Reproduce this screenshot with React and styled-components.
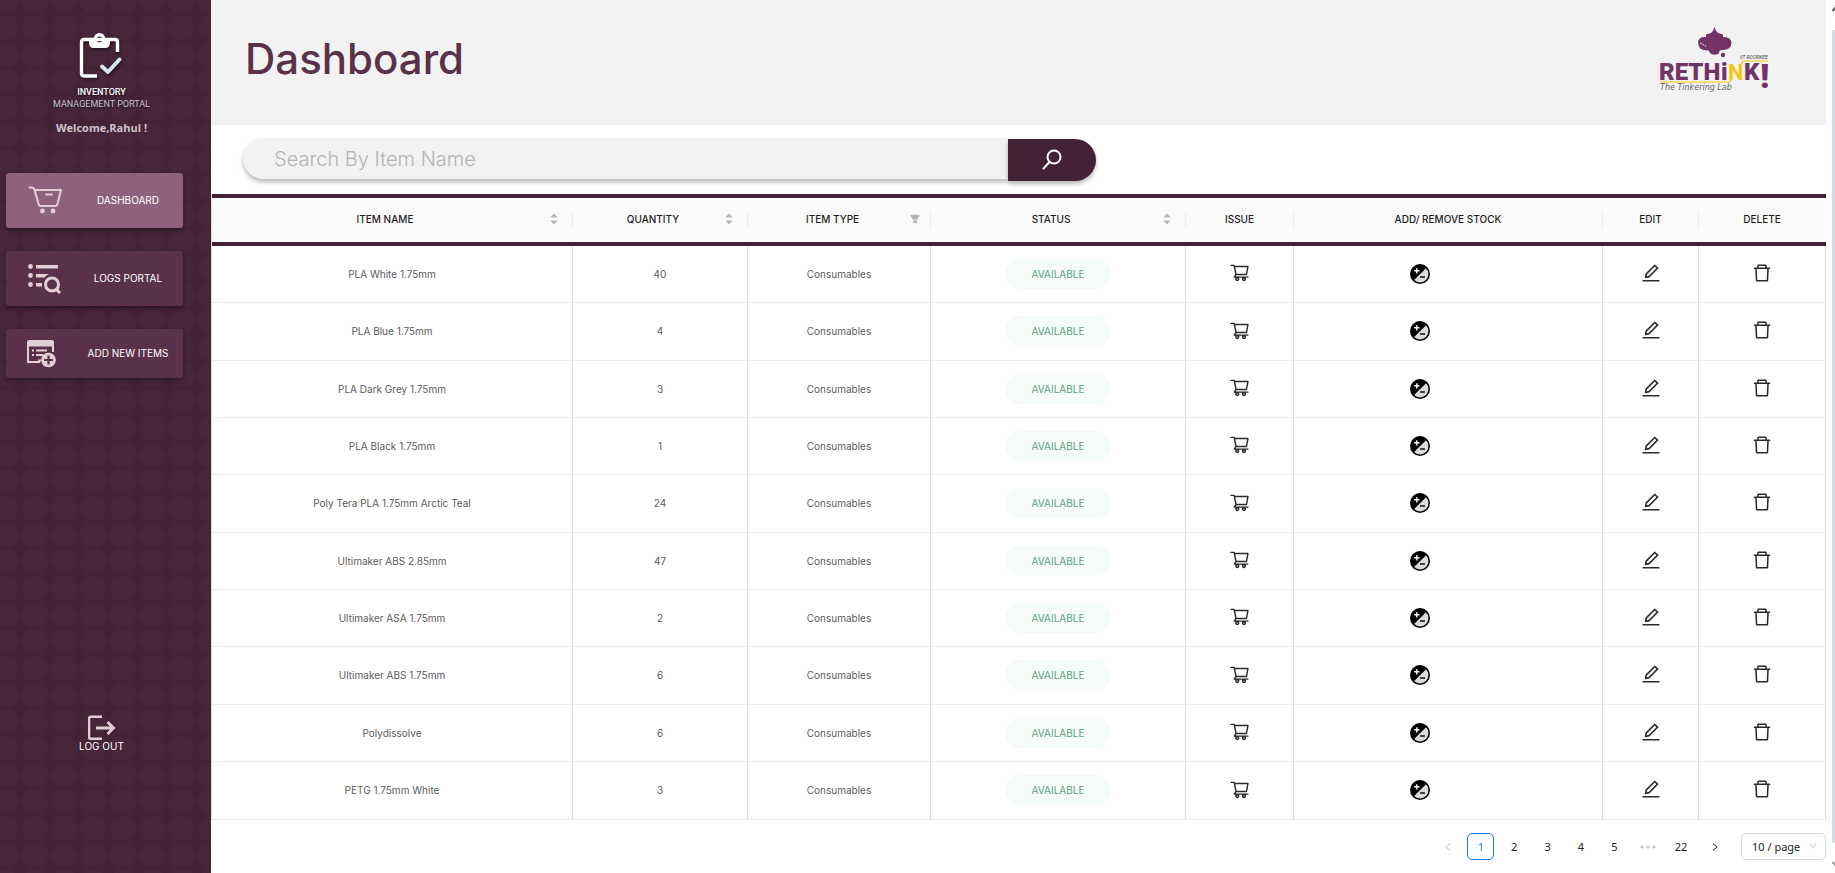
import React from "react";
import styled, { createGlobalStyle, css } from "styled-components";
import {
  AiOutlineShoppingCart,
  AiOutlineEdit,
  AiOutlineDelete,
  AiOutlineLeft,
  AiOutlineRight,
  AiOutlineDown,
  AiFillFilter,
} from "react-icons/ai";

const color = {
  plum: "#432235",
  plumHex: "#462638",
  plumButton: "#593249",
  plumActive: "#90617c",
  cream: "#e0d0d4",
  band: "#f2f2f2",
  line: "#dcdcdc",
};

const GlobalStyle = createGlobalStyle`
  *, *::before, *::after { box-sizing: border-box; }
  body { margin: 0; background: #fff; font-family: Inter, sans-serif; }
  button, input, select { font-family: inherit; }
`;

const Page = styled.div`
  display: flex;
  min-height: 100vh;
`;

/* ---------- sidebar ---------- */

const Sidebar = styled.aside`
  position: relative;
  flex: 0 0 211px;
  display: flex;
  flex-direction: column;
  padding: 30px 0 120px;
  background: ${color.plum};
`;

const Texture = styled.svg`
  position: absolute;
  inset: 0;
  width: 100%;
  height: 100%;
`;

const Brand = styled.div`
  position: relative;
  display: flex;
  flex-direction: column;
  align-items: center;
  padding-right: 8px;
  font-family: Roboto, sans-serif;
  font-size: 9px;
  line-height: 12px;
  text-shadow: 0 1px 2px rgba(0, 0, 0, 0.6);
`;

const BrandMark = styled.svg`
  width: 46px;
  height: 50px;
  margin-bottom: 6px;
  overflow: visible;
  filter: drop-shadow(1px 2px 1px rgba(0, 0, 0, 0.4));
`;

const BrandName = styled.span`
  color: #fff;
  font-weight: 500;
`;

const BrandSub = styled.span`
  color: #c9c5d6;
`;

const Welcome = styled.p`
  position: relative;
  margin: 10px 8px 0 0;
  font-family: "Open Sans", sans-serif;
  font-size: 11px;
  line-height: 16px;
  font-weight: 700;
  text-align: center;
  color: #cfc2ca;
`;

const Nav = styled.nav`
  position: relative;
  display: flex;
  flex-direction: column;
  gap: 23px;
  margin: 37px 28px 0 6px;
`;

const NavButton = styled.button`
  display: flex;
  align-items: center;
  gap: 11px;
  height: ${(p) => (p.$short ? 49 : 55)}px;
  padding: 0 0 0 21px;
  border: 0;
  border-radius: 3px;
  background: ${(p) => (p.$active ? color.plumActive : color.plumButton)};
  box-shadow: 0 3px 4px rgba(0, 0, 0, 0.3);
  color: #fff;
  cursor: pointer;
`;

const NavIcon = styled.svg`
  flex: none;
  width: 35px;
  height: 31px;
`;

const Label = styled.span`
  flex: 1;
  padding-bottom: 1px;
  font-size: 10px;
  line-height: 12px;
  text-align: center;
`;

const LogOut = styled.button`
  position: relative;
  display: flex;
  flex-direction: column;
  align-items: center;
  align-self: center;
  margin: auto 8px 0 0;
  padding: 0;
  border: 0;
  background: none;
  color: #fff;
  cursor: pointer;
`;

/* ---------- main ---------- */

const Main = styled.main`
  flex: 1;
  min-width: 0;
`;

const Header = styled.header`
  display: flex;
  align-items: center;
  justify-content: space-between;
  height: 125px;
  padding: 0 54px 7px 34px;
  background: ${color.band};
`;

const Title = styled.h1`
  margin: 0;
  font-size: 42px;
  line-height: 52px;
  font-weight: 500;
  color: ${color.plumButton};
`;

const SearchForm = styled.form`
  display: flex;
  max-width: 885px;
  padding: 13px 0 13px 32px;
`;

const SearchInput = styled.input`
  flex: 1;
  min-width: 0;
  height: 41px;
  padding: 0 31px;
  border: 0;
  border-radius: 21px 0 0 21px;
  outline: 0;
  background: ${color.band};
  box-shadow: 0 3px 4px rgba(0, 0, 0, 0.28);
  font-size: 20px;
  font-weight: 300;
  color: #444;
  &::placeholder {
    color: #b4b4b4;
    opacity: 1;
  }
`;

const SearchButton = styled.button`
  width: 88px;
  height: 42px;
  margin-top: 1px;
  padding: 0;
  display: grid;
  place-items: center;
  border: 0;
  border-radius: 0 21px 21px 0;
  background: ${color.plum};
  box-shadow: 0 3px 4px rgba(0, 0, 0, 0.28);
  cursor: pointer;
`;

const TableArea = styled.div`
  padding-right: 1px;
`;

const Table = styled.table`
  width: 100%;
  table-layout: fixed;
  border-collapse: separate;
  border-spacing: 0;
  border-left: 1px solid ${color.line};
  font-size: 10px;
  line-height: 12px;
`;

const HeadCell = styled.th`
  position: relative;
  height: 52px;
  padding: 0 ${(p) => (p.$filter ? 10 : 15)}px 2px 14px;
  border-top: 4px solid ${color.plum};
  border-bottom: 4px solid ${color.plum};
  background: #fafafa;
  font-weight: 500;
  color: #1f1f1f;
  &:not(:last-child)::after {
    content: "";
    position: absolute;
    top: 14px;
    right: 0;
    width: 1px;
    height: 16px;
    background: #ececec;
  }
`;

const HeadInner = styled.div`
  display: flex;
  align-items: center;
  gap: 6px;
`;

const HeadTitle = styled.span`
  flex: 1;
`;

const HeadTool = styled.button`
  display: flex;
  padding: 0;
  border: 0;
  background: none;
  color: #b3b3b3;
  cursor: pointer;
`;

const Row = styled.tr`
  height: 57px;
  &:nth-child(3n + 2) {
    height: 58px;
  }
  &:last-child {
    height: 58px;
  }
`;

const Cell = styled.td`
  padding: 0 0 1px;
  border-right: 1px solid ${color.line};
  border-bottom: 1px solid #ededed;
  text-align: center;
  color: #5c5c5c;
  ${(p) =>
    p.$stock &&
    css`
      padding-right: 56px;
    `}
`;

const Status = styled.span`
  display: inline-block;
  width: 106px;
  border-radius: 15px;
  background: #f4fbf8;
  line-height: 30px;
  color: #5f9f86;
  vertical-align: middle;
`;

const IconButton = styled.button`
  display: block;
  margin: 0 auto;
  padding: 0 0 ${(p) => (p.$raised ? 2 : 0)}px;
  border: 0;
  background: none;
  color: #2b2b2b;
  line-height: 0;
  cursor: pointer;
`;

const Footer = styled.footer`
  display: flex;
  justify-content: flex-end;
  gap: 13px;
  padding: 13px 0;
  font-family: "Noto Sans", sans-serif;
`;

const Pages = styled.nav`
  display: flex;
  justify-content: space-between;
  width: 294px;
`;

const PageButton = styled.button`
  display: grid;
  place-items: center;
  width: 27px;
  height: 27px;
  padding: 0;
  border: 1px solid ${(p) => (p.$current ? "#1677ff" : "transparent")};
  border-radius: 5px;
  background: none;
  font-size: 11px;
  color: ${(p) => (p.$current ? "#1677ff" : p.disabled ? "#bfbfbf" : "#222")};
`;

const SizePicker = styled.label`
  position: relative;
  display: block;
  width: 85px;
  height: 27px;
  svg {
    position: absolute;
    top: 8px;
    right: 8px;
    color: #b8b8b8;
    pointer-events: none;
  }
`;

const SizeSelect = styled.select`
  appearance: none;
  width: 100%;
  height: 100%;
  padding: 0 10px;
  border: 1px solid #d9d9d9;
  border-radius: 5px;
  background: #fff;
  font-size: 11px;
  color: #222;
`;

const ScrollRail = styled.div`
  flex: 0 0 3px;
  display: flex;
  flex-direction: column;
  gap: 18px;
  margin-left: 6px;
  padding: 6px 0;
  overflow: hidden;
`;

const ScrollThumb = styled.div`
  flex: 1;
  border-radius: 2px 0 0 2px;
  background: #d0dce4;
`;

/* ---------- drawings ---------- */

function HexTexture() {
  return (
    <Texture aria-hidden="true">
      <defs>
        <pattern id="hex" x="-9.3" y="-10.7" width="29.4" height="26.7" patternUnits="userSpaceOnUse">
          <path d="M0 11.5 L6.8 .3 H22.6 L29.4 11.5 L22.6 23 H6.8 Z" fill={color.plumHex} />
          <path d="M0 24.8 H29.4" stroke="#452333" strokeWidth="1" />
        </pattern>
      </defs>
      <rect width="100%" height="100%" fill="url(#hex)" />
    </Texture>
  );
}

function Clipboard() {
  return (
    <BrandMark viewBox="1 -2 46 50" aria-hidden="true">
      <path d="M19 44 H6 Q3.500 44 3.500 41.500 V10 Q3.500 7.500 6 7.500 H37 Q39.500 7.500 39.500 10 V20" fill="none" stroke="#fff" strokeWidth="3.400" />
      <path fillRule="evenodd" fill="#fff" d="M11 7 H15.500 Q16.500 1 21.500 1 T27.500 7 H32 V11 Q32 16 27 16 H16 Q11 16 11 11 Z M21.500 4.500 A2.900 2.900 0 1 0 21.500 10.300 A2.900 2.900 0 1 0 21.500 4.500 Z" />
      <path d="M24 34.500 L30 40 L41.500 27.500" fill="none" stroke="#d3e4f2" strokeWidth="4" strokeLinecap="round" strokeLinejoin="round" />
    </BrandMark>
  );
}

const navDrawings = {
  cart: (
    <>
      <path d="M2.500 2.500 Q7 2 7.500 4.500 L11.500 19 Q12 21 14 21 H28 Q30 21 30.500 19 L34 5 H8" fill="none" stroke="currentColor" strokeWidth="2" strokeLinecap="round" strokeLinejoin="round" />
      <path d="M19 9.500 H25" stroke="currentColor" strokeWidth="2" strokeLinecap="round" />
      <circle cx="15.500" cy="26" r="2.400" fill="currentColor" />
      <circle cx="26" cy="26" r="2.400" fill="currentColor" />
    </>
  ),
  logs: (
    <>
      <g fill="currentColor">
        <circle cx="3.500" cy="3.500" r="2.400" />
        <circle cx="3.500" cy="12.500" r="2.400" />
        <circle cx="3.500" cy="21.500" r="2.400" />
        <path d="M9 2 H31 V5.500 H9 Z M9 11 H22 Q19 12 17.500 14.500 H9 Z M9 20 H15 V23.500 H9 Z" />
      </g>
      <circle cx="25" cy="21.500" r="6.500" fill="none" stroke="currentColor" strokeWidth="3" />
      <path d="M29.500 26.500 L33 30" stroke="currentColor" strokeWidth="3" />
    </>
  ),
  add: (
    <>
      <path d="M0 4 Q0 2 2 2 H25 Q27 2 27 4 V14 H25 V8.500 H2 V23 H13 V25 H0 Z" fill="currentColor" />
      <path d="M5 12.500 H7 M5 17 H7 M9 12.500 H20 M9 17 H16 M11 22.500 H14" stroke="currentColor" strokeWidth="1.800" />
      <circle cx="21.500" cy="22" r="7.300" fill="currentColor" />
      <path d="M21.500 17.500 V26.500 M17 22 H26" stroke={color.plumButton} strokeWidth="2.200" />
    </>
  ),
};

const LogoSvg = styled.svg`
  overflow: visible;
`;

function LabLogo() {
  const purple = "#733365";
  return (
    <LogoSvg width="112" height="66" viewBox="0 0 112 66" role="img" aria-label="Rethink! The Tinkering Lab, IIT Roorkee">
      <path
        fill={purple}
        d="M54.500 1 Q55.500 5 58 7 L63 8.500 V11 Q71 10.500 71.500 17 Q71 24 63 24 Q60 24 59.500 25 L58.500 28 Q52 30 49.500 26.500 L49 24.500 Q38 25 38 16.500 Q38.500 10.500 46 11 V8.500 L51 7 Q53.500 5 54.500 1 Z"
      />
      <path d="M40 17.500 Q42 16 43 19 Q45.500 18 46 21.500" fill="none" stroke="#e9dfe7" strokeWidth="1" strokeDasharray="2 1" />
      <circle cx="63" cy="29" r="2.200" fill={purple} />
      <g fontFamily="Roboto, sans-serif" fontWeight="900" fontSize="24" fill={purple}>
        <text x="-1" y="54">RETH</text>
        <text x="61" y="54">i</text>
        <text x="68" y="54" fill="#f4c50c" fontWeight="700" fontSize="22">N</text>
        <text x="84" y="54">K</text>
        <text x="100" y="62" fontSize="34">!</text>
      </g>
      <path d="M0 56 H70 L72 51 M81 38 L83 35 H108" fill="none" stroke="#f4c50c" strokeWidth="1.200" />
      <text x="0" y="64" fontFamily="DejaVu Sans, sans-serif" fontStyle="italic" fontSize="8" fill="#666">The Tinkering Lab</text>
      <text x="80" y="33" fontFamily="Roboto, sans-serif" fontStyle="italic" fontSize="5" fill="#444">IIT ROORKEE</text>
    </LogoSvg>
  );
}

function StockIcon() {
  return (
    <svg width="20" height="20" viewBox="0 0 20 20" aria-hidden="true">
      <circle cx="10" cy="10" r="10" fill="#000" />
      <path d="M16 4.200 A8.300 8.300 0 0 1 4.200 16 Z" fill="#dcdcdc" />
      <path d="M6.800 4.200 V9.400 M4.200 6.800 H9.400" stroke="#fff" strokeWidth="1.400" />
      <path d="M10 13 H15" stroke="#000" strokeWidth="1.400" />
    </svg>
  );
}

/* ---------- data ---------- */

const navItems = [
  { text: "DASHBOARD", drawing: "cart", active: true },
  { text: "LOGS PORTAL", drawing: "logs" },
  { text: "ADD NEW ITEMS", drawing: "add", short: true },
];

const columns = [
  { title: "ITEM NAME", width: 361, tool: "sort" },
  { title: "QUANTITY", width: 175, tool: "sort" },
  { title: "ITEM TYPE", width: 183, tool: "filter" },
  { title: "STATUS", width: 255, tool: "sort" },
  { title: "ISSUE", width: 108 },
  { title: "ADD/ REMOVE STOCK", width: 309 },
  { title: "EDIT", width: 96 },
  { title: "DELETE", width: 127 },
];

const items = [
  ["PLA White 1.75mm", 40],
  ["PLA Blue 1.75mm", 4],
  ["PLA Dark Grey 1.75mm", 3],
  ["PLA Black 1.75mm", 1],
  ["Poly Tera PLA 1.75mm Arctic Teal", 24],
  ["Ultimaker ABS 2.85mm", 47],
  ["Ultimaker ASA 1.75mm", 2],
  ["Ultimaker ABS 1.75mm", 6],
  ["Polydissolve", 6],
  ["PETG 1.75mm White", 3],
];

function ColumnTool({ kind, title }) {
  if (kind === "filter") {
    return (
      <HeadTool type="button" aria-label={`Filter ${title}`}>
        <AiFillFilter size={12} />
      </HeadTool>
    );
  }
  return (
    <HeadTool type="button" aria-label={`Sort by ${title}`}>
      <svg width="8" height="12" viewBox="0 0 8 12" aria-hidden="true">
        <path d="M.3 4.500 L4 .5 L7.700 4.500 Z M.3 7.500 L4 11.500 L7.700 7.500 Z" fill="currentColor" />
      </svg>
    </HeadTool>
  );
}

export default function App() {
  return (
    <Page>
      <GlobalStyle />
      <Sidebar>
        <HexTexture />
        <Brand>
          <Clipboard />
          <BrandName>INVENTORY</BrandName>
          <BrandSub>MANAGEMENT PORTAL</BrandSub>
        </Brand>
        <Welcome>Welcome,Rahul !</Welcome>
        <Nav aria-label="Sections">
          {navItems.map((n) => (
            <NavButton key={n.text} type="button" $active={n.active} $short={n.short}>
              <NavIcon viewBox="0 0 35 31" color={color.cream} aria-hidden="true">
                {navDrawings[n.drawing]}
              </NavIcon>
              <Label>{n.text}</Label>
            </NavButton>
          ))}
        </Nav>
        <LogOut type="button">
          <svg width="28" height="26" viewBox="0 0 28 26" aria-hidden="true">
            <path d="M14 2.800 H3 Q1 2.800 1 4.800 V22.700 Q1 24.700 3 24.700 H14" fill="none" stroke={color.cream} strokeWidth="2.600" />
            <path d="M8 14 H25.500 M19.500 8 L25.500 14 L19.500 20" fill="none" stroke={color.cream} strokeWidth="2.800" />
          </svg>
          <Label>LOG OUT</Label>
        </LogOut>
      </Sidebar>

      <Main>
        <Header>
          <Title>Dashboard</Title>
          <LabLogo />
        </Header>

        <SearchForm role="search" onSubmit={(e) => e.preventDefault()}>
          <SearchInput type="text" aria-label="Search by item name" placeholder="Search By Item Name" />
          <SearchButton type="submit" aria-label="Search">
            <svg width="20" height="22" viewBox="0 0 20 22" fill="none" stroke="#fff" strokeWidth="2" strokeLinecap="round" aria-hidden="true">
              <circle cx="12" cy="8" r="6.500" />
              <path d="M7.500 13 L1.500 19.500" />
            </svg>
          </SearchButton>
        </SearchForm>

        <TableArea>
          <Table>
            <colgroup>
              {columns.map((c) => (
                <col key={c.title} width={c.width} />
              ))}
            </colgroup>
            <thead>
              <tr>
                {columns.map((c) => (
                  <HeadCell key={c.title} scope="col" $filter={c.tool === "filter"}>
                    <HeadInner>
                      <HeadTitle>{c.title}</HeadTitle>
                      {c.tool && <ColumnTool kind={c.tool} title={c.title} />}
                    </HeadInner>
                  </HeadCell>
                ))}
              </tr>
            </thead>
            <tbody>
              {items.map(([name, quantity]) => (
                <Row key={name}>
                  <Cell>{name}</Cell>
                  <Cell>{quantity}</Cell>
                  <Cell>Consumables</Cell>
                  <Cell>
                    <Status>AVAILABLE</Status>
                  </Cell>
                  <Cell>
                    <IconButton type="button" $raised aria-label={`Issue ${name}`}>
                      <AiOutlineShoppingCart size={21} />
                    </IconButton>
                  </Cell>
                  <Cell $stock>
                    <IconButton type="button" aria-label={`Add or remove stock of ${name}`}>
                      <StockIcon />
                    </IconButton>
                  </Cell>
                  <Cell>
                    <IconButton type="button" $raised aria-label={`Edit ${name}`}>
                      <AiOutlineEdit size={22} />
                    </IconButton>
                  </Cell>
                  <Cell>
                    <IconButton type="button" $raised aria-label={`Delete ${name}`}>
                      <AiOutlineDelete size={22} />
                    </IconButton>
                  </Cell>
                </Row>
              ))}
            </tbody>
          </Table>
        </TableArea>

        <Footer>
          <Pages aria-label="Pages">
            <PageButton type="button" disabled aria-label="Previous page">
              <AiOutlineLeft size={10} />
            </PageButton>
            <PageButton type="button" $current aria-current="page">1</PageButton>
            {[2, 3, 4, 5].map((n) => (
              <PageButton key={n} type="button">{n}</PageButton>
            ))}
            <PageButton type="button" disabled aria-label="Next five pages">
              <svg width="16" height="4" viewBox="0 0 16 4" fill="currentColor" aria-hidden="true">
                <circle cx="2" cy="2" r="1.500" />
                <circle cx="8" cy="2" r="1.500" />
                <circle cx="14" cy="2" r="1.500" />
              </svg>
            </PageButton>
            <PageButton type="button">22</PageButton>
            <PageButton type="button" aria-label="Next page">
              <AiOutlineRight size={10} />
            </PageButton>
          </Pages>
          <SizePicker>
            <SizeSelect aria-label="Rows per page" defaultValue="10">
              <option value="10">10 / page</option>
              <option value="20">20 / page</option>
              <option value="50">50 / page</option>
            </SizeSelect>
            <AiOutlineDown size={10} />
          </SizePicker>
        </Footer>
      </Main>

      <ScrollRail aria-hidden="true">
        <svg width="6" height="6" viewBox="0 0 6 6">
          <path d="M.5 5 L4 1" stroke="#555" strokeWidth="2" />
        </svg>
        <ScrollThumb />
        <svg width="6" height="6" viewBox="0 0 6 6">
          <path d="M.5 1 L4 5" stroke="#999" strokeWidth="2" />
        </svg>
      </ScrollRail>
    </Page>
  );
}
